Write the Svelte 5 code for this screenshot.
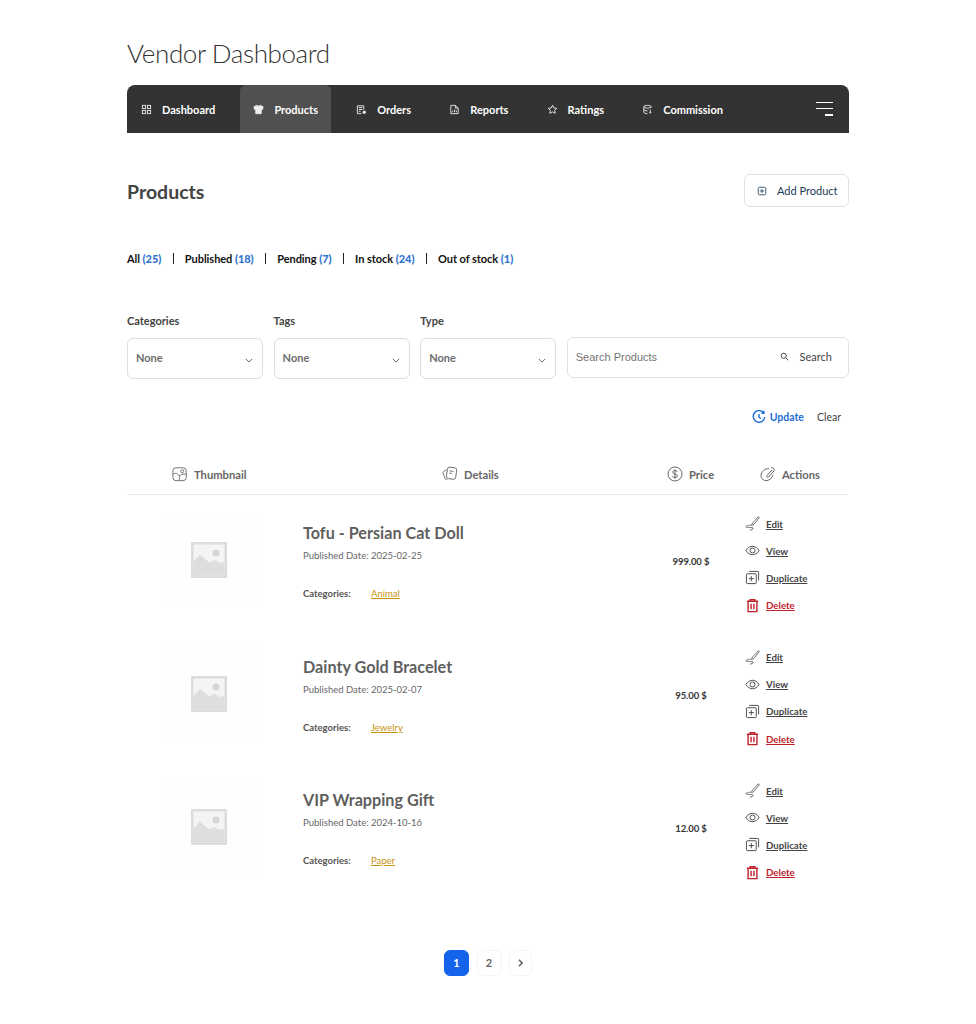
<script>
  const tabs = [
    { label: 'Dashboard', icon: 'dash' },
    { label: 'Products', icon: 'shirt', active: true },
    { label: 'Orders', icon: 'orders' },
    { label: 'Reports', icon: 'report' },
    { label: 'Ratings', icon: 'star' },
    { label: 'Commission', icon: 'db' }
  ];

  const statuses = [
    ['All', 25],
    ['Published', 18],
    ['Pending', 7],
    ['In stock', 24],
    ['Out of stock', 1]
  ];

  const filters = ['Categories', 'Tags', 'Type'];

  const products = [
    { name: 'Tofu - Persian Cat Doll', date: '2025-02-25', category: 'Animal', price: '999.00 $' },
    { name: 'Dainty Gold Bracelet', date: '2025-02-07', category: 'Jewelry', price: '95.00 $' },
    { name: 'VIP Wrapping Gift', date: '2024-10-16', category: 'Paper', price: '12.00 $' }
  ];
</script>

<main>
  <h1>Vendor Dashboard</h1>

  <nav>
    {#each tabs as tab}
      <a class="tab" class:active={tab.active}>
        <svg class="tab-icon" viewBox="0 0 12 12" fill="none" stroke="currentColor" stroke-width="1">
          {#if tab.icon === 'dash'}
            <rect x="1.5" y="1.5" width="3.5" height="3.5" />
            <rect x="7" y="1.5" width="3.5" height="3.5" />
            <rect x="1.5" y="7" width="3.5" height="3.5" />
            <rect x="7" y="7" width="3.5" height="3.5" />
          {:else if tab.icon === 'shirt'}
            <path d="M4 1.5 L1 3 L1.6 6 L3 5.6 L3 10.5 L9 10.5 L9 5.6 L10.4 6 L11 3 L8 1.5 Q6 3.2 4 1.5Z" fill="currentColor" />
          {:else if tab.icon === 'orders'}
            <path d="M8.5 6V2H1.5v8.5H6M3 4h4M3 6h4M3 8h2" />
            <circle cx="9" cy="9" r="1.4" fill="currentColor" />
          {:else if tab.icon === 'report'}
            <path d="M2 1.5h5l3 3v6H2zM7 1.5v3h3M4 9V7.5M6 9V6M8 9V7" />
          {:else if tab.icon === 'star'}
            <path d="M6 1.3l1.4 3 3.3.4-2.4 2.2.6 3.3L6 8.6l-2.9 1.6.6-3.3-2.4-2.2 3.3-.4z" />
          {:else}
            <path d="M10 4V3c0-.9-1.8-1.5-4-1.5S2 2.1 2 3v6c0 .9 1.8 1.5 4 1.5M2 3c0 .9 1.8 1.5 4 1.5S10 3.9 10 3M2 6c0 .9 1.8 1.5 4 1.5M9 6v4M8 9l1 1 1-1" />
          {/if}
        </svg>
        {tab.label}
      </a>
    {/each}
    <button class="burger" aria-label="Menu"><span></span><span></span><span></span></button>
  </nav>

  <header class="head">
    <h2>Products</h2>
    <button class="add">
      <svg viewBox="0 0 12 12" fill="none" stroke="currentColor" stroke-width="1"><rect x="1.5" y="1.5" width="9" height="9" rx="1.5" /><path d="M6 3.5v5M3.5 6h5" /></svg>
      Add Product
    </button>
  </header>

  <div class="statuses">
    {#each statuses as [label, count], i}
      {#if i > 0}<span class="sep"></span>{/if}
      <span class="status">{label} <b>({count})</b></span>
    {/each}
  </div>

  <div class="filters">
    {#each filters as filter}
      <div class="filter">
        <label for={filter}>{filter}</label>
        <div class="select" id={filter}>
          None
          <svg viewBox="0 0 10 6" fill="none" stroke="currentColor" stroke-width="1.1"><path d="M1 1l4 4 4-4" /></svg>
        </div>
      </div>
    {/each}
    <div class="search">
      <span class="placeholder">Search Products</span>
      <svg viewBox="0 0 12 12" fill="none" stroke="currentColor" stroke-width="1.3"><circle cx="5" cy="5" r="3.4" /><path d="M7.5 7.5l3.5 3.5" /></svg>
      <span class="search-label">Search</span>
    </div>
  </div>

  <div class="actions-row">
    <button class="update">
      <svg viewBox="0 0 16 16" fill="none" stroke="currentColor" stroke-width="1.6"><path d="M13.2 3.2A6.6 6.6 0 1 0 14.6 8M13.6 0.8v3h-3M8 4.5v3.8l2.4 1.4" /></svg>
      Update
    </button>
    <button class="clear">Clear</button>
  </div>

  <div class="thead">
    <div class="th th-thumb">
      <svg viewBox="0 0 18 18" fill="none" stroke="currentColor" stroke-width="1"><rect x="1" y="2" width="15" height="14.5" rx="3.5" /><circle cx="11.5" cy="6" r="1.7" /><path d="M1 9.5c3-2.5 5.5-1 7 1.5s0 4.5 0 5.5M16 9.5c-2-1-4.5-.5-8 1.5" /></svg>
      Thumbnail
    </div>
    <div class="th th-details">
      <svg viewBox="0 0 18 18" fill="none" stroke="currentColor" stroke-width="1"><path d="M5 4.5L2 6c-1 .5-1 1.5-.7 2.3l2 5.5c.4 1.2 1.5 1.7 2.7 1.2" /><rect x="5.5" y="1.5" width="10.5" height="13" rx="2.5" transform="rotate(8 10 8)" /><path d="M8.5 5.5l4.5.6M8.2 8l3 .4" /></svg>
      Details
    </div>
    <div class="th th-price">
      <svg viewBox="0 0 16 16" fill="none" stroke="currentColor" stroke-width="1"><circle cx="8" cy="8" r="7" /><path d="M10.3 5.8C10 4.8 9 4.5 8 4.5c-1.3 0-2.3.6-2.3 1.7 0 2.4 4.7 1.2 4.7 3.6 0 1.1-1 1.700-2.4 1.700-1.2 0-2.2-.5-2.5-1.500M8 3.300v9.400" /></svg>
      Price
    </div>
    <div class="th th-actions">
      <svg viewBox="0 0 16 16" fill="none" stroke="currentColor" stroke-width="1"><path d="M11 1.8C13 1 15 3 14 5l-5.500 6c-1 1-2.500-.5-1.500-1.500l5-5.500M9 2.700C4.500 2.500 1 5.500 1 9.500c0 3.500 3 5.500 6 5 3-.5 5-2.500 6-5.500" /></svg>
      Actions
    </div>
  </div>

  {#each products as p}
    <article class="row">
      <div class="thumb">
        <svg viewBox="0 0 36 36">
          <rect width="36" height="36" rx="1" fill="#dcdcdc" />
          <rect x="2.5" y="2.5" width="31" height="31" fill="#f4f4f4" />
          <path d="M2.5 20 L9 12.5 L18 20.5 L23 18 L29 21 L33.5 20 V33.5 H2.5Z" fill="#dedede" />
          <circle cx="25" cy="11" r="3.6" fill="#d6d6d6" />
        </svg>
      </div>
      <div class="details">
        <h3>{p.name}</h3>
        <p class="date">Published Date: {p.date}</p>
        <p class="cats"><strong>Categories:</strong><a>{p.category}</a></p>
      </div>
      <div class="price">{p.price}</div>
      <ul class="links">
        <li>
          <svg viewBox="0 0 16 16" fill="none" stroke="currentColor" stroke-width="0.8"><path d="M14 1c.8-.3 1.4.3 1 1.1L9.5 9c-.6.8-1.6 1-2.3.9 0-.9.2-1.7.8-2.4zM7 10C4 9.5.8 10.5 1 11.6c.2 1 7.5.2 7.7 1.4C8.900 14.300 6.500 15 5 15" /></svg>
          <a>Edit</a>
        </li>
        <li>
          <svg viewBox="0 0 16 16" fill="none" stroke="currentColor" stroke-width="1"><path d="M1 8c1.8-3 4.2-4.5 7-4.5S13.200 5 15 8c-1.8 3-4.200 4.500-7 4.500S2.800 11 1 8z" /><circle cx="8" cy="8" r="2.700" /></svg>
          <a>View</a>
        </li>
        <li>
          <svg viewBox="0 0 16 16" fill="none" stroke="currentColor" stroke-width="1"><rect x="1.5" y="4" width="10.5" height="10.5" rx="1" /><path d="M4.5 1.500h9.200c.5 0 .8.300.8.800V11M6.700 6.500v5.500M4 9.200h5.500" /></svg>
          <a>Duplicate</a>
        </li>
        <li class="danger">
          <svg viewBox="0 0 16 16" fill="none" stroke="currentColor" stroke-width="1.5"><path d="M2 3.500h12M5.500 3.500V1.700h5v1.800M3.300 3.500v11h9.400v-11M6.500 6v6M9.500 6v6" /></svg>
          <a>Delete</a>
        </li>
      </ul>
    </article>
  {/each}

  <div class="pager">
    <button class="page current">1</button>
    <button class="page">2</button>
    <button class="page next" aria-label="Next">
      <svg viewBox="0 0 6 10" fill="none" stroke="currentColor" stroke-width="2"><path d="M1 1l4 4-4 4" /></svg>
    </button>
  </div>
</main>

<style>
  :global(body) {
    background: #fff;
  }
  main {
    width: 722px;
    margin-left: 127px;
    padding-top: 36px;
    padding-bottom: 48px;
    font-family: Lato, "Open Sans", sans-serif;
    color: #333;
  }
  button {
    font-family: inherit;
    background: none;
    border: none;
    padding: 0;
  }
  h1 {
    margin: 0 0 14px;
    height: 35px;
    font-size: 26px;
    line-height: 35px;
    font-weight: 300;
    letter-spacing: -0.4px;
    color: #333;
  }
  nav {
    display: flex;
    gap: 12.2px;
    height: 48px;
    padding-left: 1px;
    background: #333;
    border-radius: 8px 8px 0 0;
  }
  .tab {
    display: flex;
    align-items: center;
    gap: 10px;
    padding: 0 13px;
    color: #fff;
    font-size: 11px;
    font-weight: 700;
  }
  .tab.active {
    background: #505050;
    border-radius: 6px 6px 0 0;
  }
  .tab-icon {
    width: 11px;
    height: 11px;
    flex: none;
    opacity: 0.9;
  }
  .burger {
    margin-left: auto;
    margin-right: 16px;
    width: 17px;
    align-self: center;
    display: flex;
    flex-direction: column;
    align-items: flex-end;
    gap: 5px;
  }
  .burger span {
    display: block;
    height: 1px;
    width: 17px;
    background: #fff;
  }
  .burger span:last-child {
    height: 2px;
    width: 8px;
  }
  .head {
    display: flex;
    justify-content: space-between;
    align-items: flex-start;
    margin-top: 41px;
    height: 33px;
  }
  h2 {
    margin: 5px 0 0;
    font-size: 19.5px;
    line-height: 26px;
    font-weight: 700;
    color: #444;
  }
  .add {
    box-sizing: border-box;
    width: 105px;
    height: 33px;
    border: 1px solid #dfe3e6;
    border-radius: 6px;
    display: flex;
    align-items: center;
    gap: 10px;
    padding-left: 12px;
    color: #1d3b56;
    font-size: 11px;
  }
  .add svg {
    width: 10px;
    height: 10px;
  }
  .statuses {
    display: flex;
    align-items: center;
    margin-top: 43px;
    height: 16px;
    font-size: 11px;
    font-weight: 700;
    color: #111;
    letter-spacing: -0.05px;
  }
  .status b {
    color: #2f74d0;
  }
  .sep {
    width: 1px;
    height: 11px;
    margin: 0 11.3px;
    background: #222;
  }
  .filters {
    display: flex;
    align-items: flex-end;
    gap: 10.6px;
    margin-top: 48px;
  }
  .filter {
    width: 136px;
    flex: none;
  }
  .filter label {
    display: block;
    font-size: 11px;
    font-weight: 700;
    line-height: 14px;
    color: #444;
    margin-bottom: 10px;
  }
  .select {
    box-sizing: border-box;
    height: 41px;
    border: 1px solid #dedede;
    border-radius: 6px;
    display: flex;
    align-items: center;
    justify-content: space-between;
    padding: 0 9px 2px 8px;
    font-size: 11px;
    font-weight: 700;
    color: #6d6d6d;
  }
  .select svg {
    width: 8px;
    height: 5px;
    margin-top: 5px;
    color: #555;
  }
  .search {
    box-sizing: border-box;
    flex: 1;
    height: 41px;
    margin-bottom: 1px;
    border: 1px solid #e2e2e2;
    border-radius: 6px;
    display: flex;
    align-items: center;
    padding: 0 16px 2px 8px;
    font-size: 11px;
    color: #444;
  }
  .placeholder {
    font-family: "Liberation Sans", Arial, sans-serif;
    color: #757575;
    margin-right: auto;
  }
  .search svg {
    width: 9px;
    height: 9px;
    margin-right: 11px;
  }
  .actions-row {
    display: flex;
    justify-content: flex-end;
    align-items: center;
    gap: 13px;
    margin-top: 30px;
    padding-right: 8px;
    height: 16px;
  }
  .update {
    display: flex;
    align-items: center;
    gap: 4px;
    font-size: 10.5px;
    font-weight: 700;
    color: #1f6fd6;
  }
  .update svg {
    width: 14px;
    height: 14px;
  }
  .clear {
    font-size: 10.5px;
    color: #444;
  }
  .thead {
    display: flex;
    align-items: center;
    box-sizing: border-box;
    height: 39px;
    margin-top: 31px;
    margin-right: 1px;
    padding-bottom: 2px;
    border-bottom: 1px solid #e6e6e6;
  }
  .th {
    display: flex;
    align-items: center;
    gap: 6px;
    font-size: 11.2px;
    font-weight: 700;
    color: #666;
  }
  .th svg {
    width: 16px;
    height: 16px;
    flex: none;
  }
  .th-thumb {
    margin-left: 45px;
    width: 270px;
  }
  .th-details {
    width: 225px;
  }
  .th-price {
    width: 93px;
  }
  .row {
    display: flex;
    height: 133.5px;
    align-items: flex-start;
  }
  .thumb {
    width: 98px;
    height: 94px;
    margin: 18px 0 0 33px;
    flex: none;
    display: flex;
    align-items: center;
    justify-content: center;
    background: #fefefe;
  }
  .thumb svg {
    width: 36px;
    height: 36px;
  }
  .details {
    width: 340px;
    margin: 26px 0 0 45px;
  }
  h3 {
    margin: 0;
    font-size: 16.2px;
    line-height: 24px;
    font-weight: 700;
    color: #5f5f5f;
  }
  .date {
    margin: 4px 0 0;
    font-size: 9.5px;
    line-height: 14px;
    color: #666;
  }
  .cats {
    margin: 24px 0 0;
    display: flex;
    font-size: 9.5px;
    line-height: 14px;
  }
  .cats strong {
    width: 68px;
    color: #555;
  }
  .cats a {
    color: #c8930f;
    text-decoration: underline;
  }
  .price {
    width: 70px;
    margin-top: 61px;
    margin-left: 13px;
    text-align: center;
    font-size: 9.5px;
    font-weight: 700;
    letter-spacing: -0.1px;
    color: #333;
    flex: none;
  }
  .links {
    list-style: none;
    margin: 15px 0 0 auto;
    padding: 0;
    width: 104px;
  }
  .links li {
    display: flex;
    align-items: center;
    height: 27.2px;
    gap: 6px;
    font-size: 9.7px;
    font-weight: 700;
    color: #444;
  }
  .links li svg {
    width: 15px;
    height: 15px;
    flex: none;
  }
  .links a {
    text-decoration: underline;
  }
  .links .danger {
    color: #c0222c;
  }
  .pager {
    display: flex;
    justify-content: center;
    gap: 7.5px;
    margin-top: 54px;
  }
  .page {
    box-sizing: border-box;
    width: 25px;
    height: 26px;
    border: 1px solid #f5f5f5;
    border-radius: 6px;
    font-size: 11px;
    font-weight: 700;
    color: #666;
    display: flex;
    align-items: center;
    justify-content: center;
  }
  .page.current {
    background: #1463ea;
    border-color: #1463ea;
    color: #fff;
  }
  .next {
    width: 23px;
  }
  .next svg {
    width: 5px;
    height: 8px;
  }
</style>
